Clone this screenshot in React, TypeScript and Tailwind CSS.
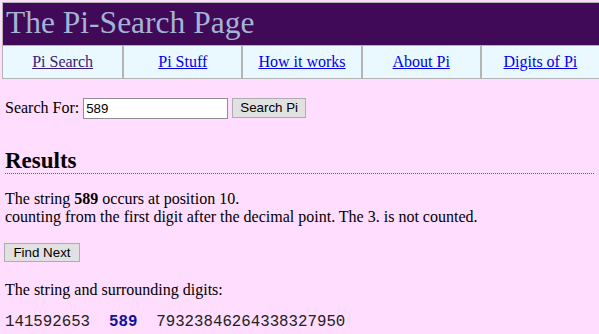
import React from 'react';

const navLinks = [
  { label: 'Pi Search', visited: true },
  { label: 'Pi Stuff', visited: false },
  { label: 'How it works', visited: false },
  { label: 'About Pi', visited: false },
  { label: 'Digits of Pi', visited: false },
];

const serif = "font-['Liberation_Serif','Times_New_Roman',serif]";

const App: React.FC = () => {
  return (
    <div className={`min-h-[334px] w-[599px] overflow-hidden bg-[#ffddff] text-[16px] text-black ${serif}`}>
      {/* Header table */}
      <div className="pl-[2px] pt-[2px]">
        <div className="border border-r-0 border-[#b4b4b4]">
          <div className="h-[42px] bg-[#400a58] pl-[3px]">
            <h1 className="text-[31.5px] leading-[40px] text-[#a4b4d4]">The Pi-Search Page</h1>
          </div>
          <div className="grid h-[33px] grid-cols-5 border-t border-[#b4b4b4] bg-[#eaf8ff]">
            {navLinks.map((link, idx) => (
              <div
                key={link.label}
                className={`flex items-center justify-center ${idx > 0 ? 'border-l-2 border-[#b4b4b4]' : ''}`}
              >
                <a href="#" className={`underline ${link.visited ? 'text-[#3a1a7a]' : 'text-[#0000ee]'}`}>
                  {link.label}
                </a>
              </div>
            ))}
          </div>
        </div>
      </div>

      <div className="px-[5px]">
        {/* Search form */}
        <div className="mt-[17px] flex items-center gap-[4px]">
          <span>Search For:</span>
          <input
            type="text"
            defaultValue="589"
            className="h-[21px] w-[145px] border border-[#8f8f8f] bg-white px-[2px] font-['Liberation_Sans',Arial,sans-serif] text-[13.33px] outline-none"
          />
          <button className="h-[20px] w-[74px] border border-[#adadad] bg-[#e1e1e1] font-['Liberation_Sans',Arial,sans-serif] text-[13.33px] leading-none text-black">
            Search Pi
          </button>
        </div>

        {/* Results */}
        <h2 className="mt-[28px] border-b border-dotted border-[#ff2020] text-[23px] font-bold leading-[25px]">Results</h2>
        <p className="mt-[16px] leading-[18px]">
          The string <b>589</b> occurs at position 10.
          <br />
          counting from the first digit after the decimal point. The 3. is not counted.
        </p>

        <button className="-ml-[1px] mt-[17px] h-[19px] w-[76px] border border-[#adadad] bg-[#e1e1e1] font-['Liberation_Sans',Arial,sans-serif] text-[13.33px] leading-none text-black">
          Find Next
        </button>

        <p className="mt-[17px] leading-[18px]">The string and surrounding digits:</p>
        <p className="mt-[13px] whitespace-pre font-['Liberation_Mono','Courier_New',monospace] text-[15.75px] leading-[20px] text-[#222]">
          141592653{'  '}
          <b className="text-[#10109a]">589</b>
          {'  '}79323846264338327950
        </p>
      </div>
    </div>
  );
};

export default App;
